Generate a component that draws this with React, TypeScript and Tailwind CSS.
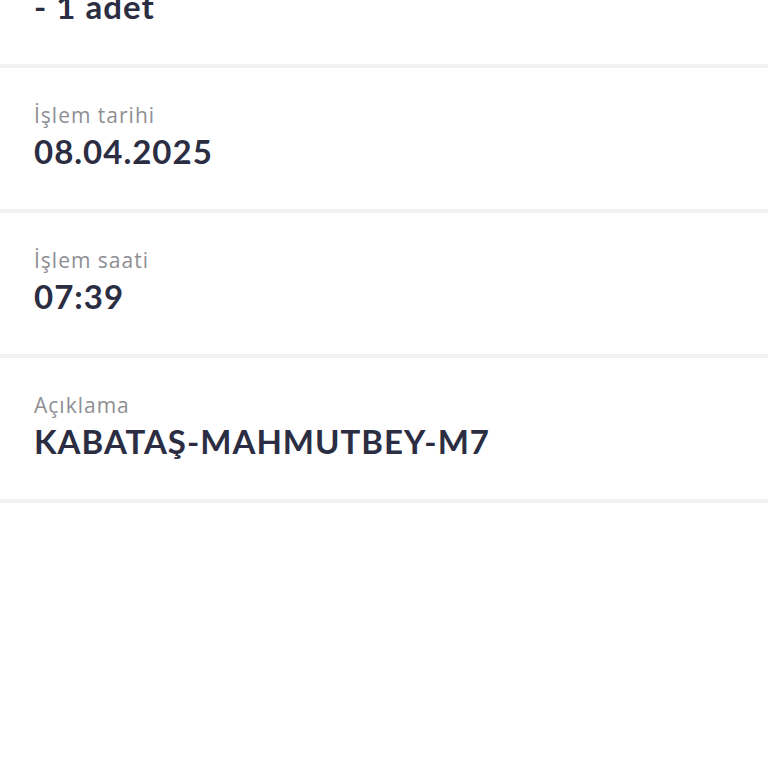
import React from "react";

const rows = [
  { label: "Miktar", value: "- 1 adet" },
  { label: "İşlem tarihi", value: "08.04.2025" },
  { label: "İşlem saati", value: "07:39" },
  { label: "Açıklama", value: "KABATAŞ-MAHMUTBEY-M7" },
];

export default function App() {
  return (
    <div className="w-[768px] h-[768px] overflow-hidden bg-white" style={{ fontFamily: "Lato, 'Noto Sans', sans-serif" }}>
      <div className="-mt-[77px] flex flex-col">
        {rows.map((r) => (
          <div key={r.label} className="h-[145px] border-b-4 border-[#f2f2f3] pl-[34px] pt-[34px] flex flex-col">
            <div className="text-[21px] leading-[26px] tracking-[1px] text-[#8e8e93]" style={{ fontFamily: "'Open Sans', sans-serif" }}>{r.label}</div>
            <div className="mt-[3px] text-[33px] leading-[40px] font-bold tracking-[1px] text-[#2b2d42]">{r.value}</div>
          </div>
        ))}
      </div>
    </div>
  );
}
